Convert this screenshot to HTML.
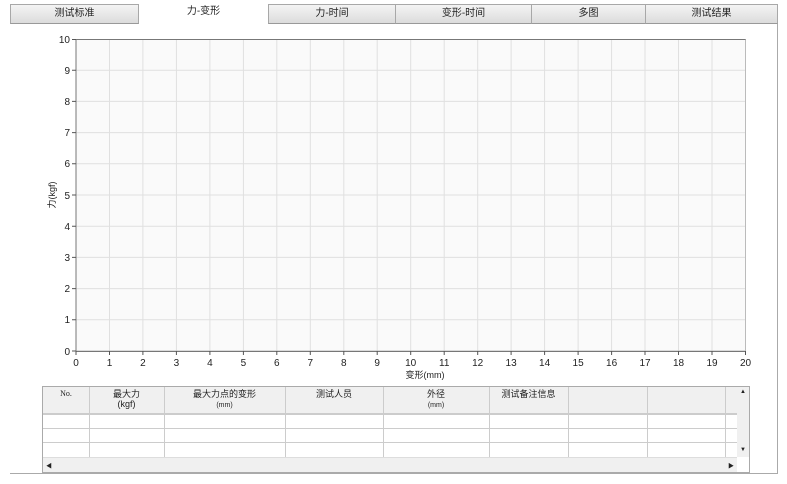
<!DOCTYPE html>
<html><head><meta charset="utf-8"><style>
*{margin:0;padding:0;box-sizing:border-box}
body{width:787px;height:484px;background:#fff;position:relative;overflow:hidden;font-family:"Liberation Sans","Noto Sans CJK SC",sans-serif;font-size:10px;color:#222}
.tab{position:absolute;top:4px;height:20px;background:linear-gradient(#f4f4f4,#dcdcdc);border:1px solid #a8a8a8;border-bottom:1px solid #999;text-align:center;line-height:18px;font-size:10px}
.tab.act{background:#fff;border:none;line-height:16px}
.frame{position:absolute;left:10px;top:24px;width:768px;height:450px;border-right:1px solid #aaa;border-bottom:1px solid #aaa}
.tbl{position:absolute;left:42px;top:386px;width:708px;height:87px;border:1px solid #aaa;background:#fff}
.hdr{position:absolute;left:0;top:0;width:694px;height:27px;background:#f0f0f0;border-bottom:1px solid #ccc}
.col{position:absolute;top:0;height:70px;border-left:1px solid #ccc}
.row{position:absolute;left:0;width:694px;border-top:1px solid #ccc}
.h{position:absolute;top:2px;text-align:center;font-size:9px;line-height:10px}
.vs{position:absolute;left:694px;top:0;width:12px;height:70px;background:#f0f0f0}
.hs{position:absolute;left:0;top:70px;width:694px;height:15px;background:#f0f0f0;border-top:1px solid #ddd}
</style></head><body>
<div class="frame"></div>
<div class="tab" style="left:10px;width:129px">测试标准</div>
<div class="tab act" style="left:139px;width:129px">力-变形</div>
<div class="tab" style="left:268px;width:128px">力-时间</div>
<div class="tab" style="left:395px;width:137px">变形-时间</div>
<div class="tab" style="left:531px;width:115px">多图</div>
<div class="tab" style="left:645px;width:133px">测试结果</div>

<svg style="position:absolute;left:0;top:0" width="787" height="484" font-family="Liberation Sans, sans-serif" font-size="10" fill="#222">
<rect x="76" y="39" width="669.5" height="312" fill="#fafafa"/>
<g stroke="#e0e0e0" stroke-width="1">
<path d="M109.5 39V351M142.9 39V351M176.4 39V351M209.9 39V351M243.4 39V351M276.8 39V351M310.3 39V351M343.8 39V351M377.2 39V351M410.7 39V351M444.2 39V351M477.7 39V351M511.1 39V351M544.6 39V351M578.1 39V351M611.6 39V351M645 39V351M678.5 39V351M712 39V351"/>
<path d="M76 70.2H745.5M76 101.4H745.5M76 132.6H745.5M76 163.8H745.5M76 195H745.5M76 226.2H745.5M76 257.4H745.5M76 288.6H745.5M76 319.8H745.5"/>
</g>
<rect x="76" y="39.5" width="669.5" height="311.5" fill="none" stroke="#bbb"/>
<path d="M76 39V351.5M75.5 351.5H745.5M76 39.5H745.5" stroke="#777" fill="none"/>
<g stroke="#555">
<path d="M72 39.5H76M72 70.2H76M72 101.4H76M72 132.6H76M72 163.8H76M72 195H76M72 226.2H76M72 257.4H76M72 288.6H76M72 319.8H76M72 351H76"/>
<path d="M76 351V355M109.5 351V355M142.9 351V355M176.4 351V355M209.9 351V355M243.4 351V355M276.8 351V355M310.3 351V355M343.8 351V355M377.2 351V355M410.7 351V355M444.2 351V355M477.7 351V355M511.1 351V355M544.6 351V355M578.1 351V355M611.6 351V355M645 351V355M678.5 351V355M712 351V355M745.5 351V355"/>
</g>
<g text-anchor="end">
<text x="70" y="43">10</text><text x="70" y="74">9</text><text x="70" y="105">8</text><text x="70" y="136">7</text><text x="70" y="167">6</text><text x="70" y="199">5</text><text x="70" y="230">4</text><text x="70" y="261">3</text><text x="70" y="292">2</text><text x="70" y="323">1</text><text x="70" y="355">0</text>
</g>
<g text-anchor="middle">
<text x="76" y="366">0</text><text x="109.5" y="366">1</text><text x="142.9" y="366">2</text><text x="176.4" y="366">3</text><text x="209.9" y="366">4</text><text x="243.4" y="366">5</text><text x="276.8" y="366">6</text><text x="310.3" y="366">7</text><text x="343.8" y="366">8</text><text x="377.2" y="366">9</text><text x="410.7" y="366">10</text><text x="444.2" y="366">11</text><text x="477.7" y="366">12</text><text x="511.1" y="366">13</text><text x="544.6" y="366">14</text><text x="578.1" y="366">15</text><text x="611.6" y="366">16</text><text x="645" y="366">17</text><text x="678.5" y="366">18</text><text x="712" y="366">19</text><text x="745.5" y="366">20</text>
<text x="425" y="378" font-family="Liberation Sans, Noto Sans CJK SC, sans-serif" font-size="9">变形(mm)</text>
<text transform="translate(55,195) rotate(-90)" font-family="Liberation Sans, Noto Sans CJK SC, sans-serif" font-size="9">力(kgf)</text>
</g>
</svg>

<div class="tbl">
<div class="hdr"></div>
<div class="row" style="top:27px"></div>
<div class="row" style="top:41px"></div>
<div class="row" style="top:55px"></div>
<div class="col" style="left:46px"></div>
<div class="col" style="left:121px"></div>
<div class="col" style="left:242px"></div>
<div class="col" style="left:340px"></div>
<div class="col" style="left:446px"></div>
<div class="col" style="left:525px"></div>
<div class="col" style="left:604px"></div>
<div class="col" style="left:682px"></div>
<div class="h" style="left:0;width:46px;font-family:'Liberation Serif',serif;font-size:8px">No.</div>
<div class="h" style="left:46px;width:75px">最大力<br>(kgf)</div>
<div class="h" style="left:121px;width:121px">最大力点的变形<br><span style="font-size:7px">(mm)</span></div>
<div class="h" style="left:242px;width:98px">测试人员</div>
<div class="h" style="left:340px;width:106px">外径<br><span style="font-size:7px">(mm)</span></div>
<div class="h" style="left:446px;width:79px">测试备注信息</div>
<div class="vs"><span style="position:absolute;left:3px;top:2px;font-size:6px">▲</span><span style="position:absolute;left:3px;top:60px;font-size:6px">▼</span></div>
<div class="hs"><span style="position:absolute;left:3px;top:3px;font-size:6px">◀</span><span style="position:absolute;left:685px;top:3px;font-size:6px">▶</span></div>
</div>
</body></html>
